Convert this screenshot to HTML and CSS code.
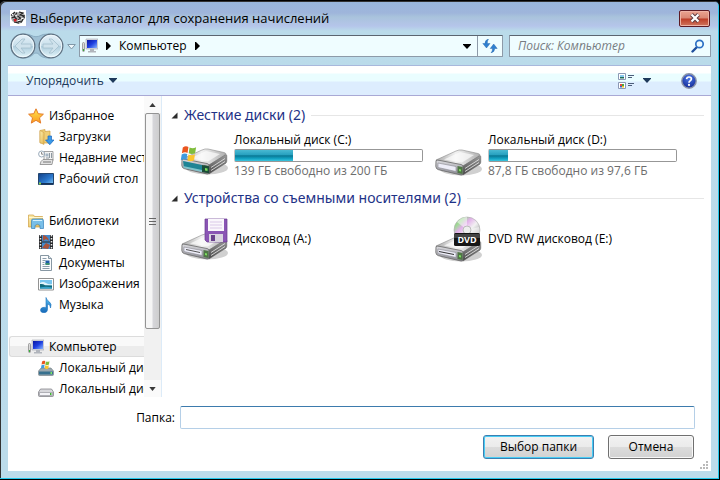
FILE: index.html
```html
<!DOCTYPE html>
<html lang="ru">
<head>
<meta charset="utf-8">
<title>Выберите каталог для сохранения начислений</title>
<link rel="stylesheet" href="styles.css">
</head>
<body>
<svg class="defs" aria-hidden="true">
  <defs>
    <linearGradient id="gTop" x1="0" y1="0" x2="1" y2="0"><stop offset="0" stop-color="#a8a8a8"/><stop offset=".45" stop-color="#f2f2f2"/><stop offset="1" stop-color="#b0b0b0"/></linearGradient>
    <linearGradient id="gFront" x1="0" y1="0" x2="0" y2="1"><stop offset="0" stop-color="#dcdce0"/><stop offset="1" stop-color="#85858d"/></linearGradient>
    <linearGradient id="gSide" x1="0" y1="0" x2="0" y2="1"><stop offset="0" stop-color="#9c9c9c"/><stop offset="1" stop-color="#484848"/></linearGradient>
    <linearGradient id="gScreen" x1="0" y1="0" x2="1" y2="1"><stop offset="0" stop-color="#0a17a0"/><stop offset=".5" stop-color="#1e3fe0"/><stop offset="1" stop-color="#86b4ff"/></linearGradient>
    <linearGradient id="gDesk" x1="0" y1="0" x2="1" y2="1"><stop offset="0" stop-color="#123f86"/><stop offset=".6" stop-color="#2d7bd0"/><stop offset="1" stop-color="#8fd0f5"/></linearGradient>
    <linearGradient id="gBlue" x1="0" y1="0" x2="0" y2="1"><stop offset="0" stop-color="#59c1f3"/><stop offset="1" stop-color="#1668b8"/></linearGradient>
    <linearGradient id="gFolder" x1="0" y1="0" x2="1" y2="1"><stop offset="0" stop-color="#fdf0b0"/><stop offset="1" stop-color="#e3b44c"/></linearGradient>
    <linearGradient id="gStar" x1="0" y1="0" x2="0" y2="1"><stop offset="0" stop-color="#ffe64d"/><stop offset="1" stop-color="#fb9a20"/></linearGradient>
    <linearGradient id="gNav" x1="0" y1="0" x2="0" y2="1"><stop offset="0" stop-color="#e6f2f9"/><stop offset=".48" stop-color="#c9dfeb"/><stop offset=".52" stop-color="#afcddd"/><stop offset="1" stop-color="#e3f5fa"/></linearGradient>
    <linearGradient id="gDisc" x1="0" y1="0" x2="1" y2="1"><stop offset="0" stop-color="#b5b5b5"/><stop offset=".2" stop-color="#9bdc90"/><stop offset=".35" stop-color="#e2b0ea"/><stop offset=".55" stop-color="#f2f2f2"/><stop offset=".8" stop-color="#a5a5a8"/><stop offset="1" stop-color="#dddddd"/></linearGradient>
    <radialGradient id="gHelp" cx=".5" cy=".3" r=".8"><stop offset="0" stop-color="#4b79e8"/><stop offset="1" stop-color="#0d1f8a"/></radialGradient>
  </defs>
  <symbol id="pc" viewBox="0 0 16 16">
    <rect x=".5" y="4.500" width="2" height="9" rx="1" fill="#dadada" stroke="#8e8e8e" stroke-width=".8"/>
    <path d="M1 11h1v2H1z" fill="#36b336"/>
    <path d="M4 1h12v10H4z" fill="#d9dbe2" stroke="#a2a6b0" stroke-width=".6"/>
    <path d="M5 2h10v8H5z" fill="url(#gScreen)"/>
    <path d="M8 11h4v2h2v1.500H6V13h2z" fill="#b1b5bc"/>
  </symbol>
  <symbol id="flag" viewBox="0 0 16 16">
    <path d="M2.500 2.200C4.500.8 6 1 7.500 1.800L6.700 7C5 6.200 3.500 6.300 1.700 7.300z" fill="#ea5620"/>
    <path d="M8.500 2.200c2 1 3.800.9 5.800-.2l-.8 5.200c-2 1.100-3.700 1.200-5.800.2z" fill="#7fbd3c"/>
    <path d="M1.500 8.400c1.900-1 3.400-1.100 5-.3l-.8 5.200c-1.500-.8-3-.7-5 .3z" fill="#3f9be0"/>
    <path d="M7.500 8.500c2 1 3.800.9 5.800-.2l-.8 5.200c-2 1.100-3.700 1.200-5.800.2z" fill="#fbc52d"/>
  </symbol>
  <symbol id="drive" viewBox="0 0 48 28">
    <ellipse cx="27" cy="20" rx="21" ry="6.500" fill="#d0d0d0"/>
    <path d="M2 11 22 2q3-1.500 6-1l16 3.500q3 .6 1 2.600L29 17 4 13z" fill="url(#gTop)" stroke="#8a8a8a" stroke-width=".6"/>
    <path d="M10 10.500 26 3l14 3L28 13.500z" fill="#fcfcfc" opacity=".7"/>
    <path d="M2 11.500q1-.6 3-.2l22 4.200q2 .5 2 2v7.300q0 1.700-2 1.200L4.500 20.700Q2 20 1.800 17.500z" fill="url(#gFront)" stroke="#666" stroke-width=".8"/>
    <path d="M29 17 46 6.500q.8 0 .8 1.500v5q0 1.500-1 2.200L29 26z" fill="url(#gSide)" stroke="#666" stroke-width=".5"/>
    <path d="M31 19.500 45 10.500M31 22.500l14-9" stroke="#ededed" stroke-width=".8"/>
    <path d="m4 14 18 3.500v5l-18-4z" fill="#ededf8" stroke="#8a8a92" stroke-width=".6"/>
    <path d="m23.500 17 5 1v7l-5-1z" fill="#4f7645"/><path d="m25 20 2 .4v2l-2-.4z" fill="#7be05e"/>
  </symbol>
  <symbol id="arrowR" viewBox="0 0 5 8"><path d="M0 0h1l4 4-4 4H0z"/></symbol>
  <symbol id="arrowD" viewBox="0 0 8 5"><path d="M0 0h8v.8L4 5 0 .8z"/></symbol>
</svg>

<div class="window">
  <header class="titlebar">
    <svg class="i16" viewBox="0 0 16 16"><path d="M0 0h16v16H0z" fill="#fff"/><path d="M1.500 6Q4 1.500 8 2.500 11 .8 14 3.500q2 3 .5 5.500L12 11.500Q10 15 7 13.500L3.500 12Q.5 10 1.500 6z" fill="#a9a9a9"/><path d="M1 5.500 5 2m-1 5 3-4.500M9 2l4 1-3 2 5 1M1.500 8l3-1 2 2-3 1m4-4 3 2-3 3 4 1 2-4m-1-2 2 2M4 12l5 1" stroke="#222" stroke-width="1.100" fill="none"/><path d="m5 5 2 1m4 3 3-1M2 4l1 1M7 11l3-1" stroke="#fff" stroke-width="1"/><path d="M4 9h2.500v2.500H4z" fill="#d31d25"/></svg>
    <h1>Выберите каталог для сохранения начислений</h1>
    <button class="close" type="button" aria-label="Закрыть"><svg width="12" height="10" viewBox="0 0 12 10"><path d="M2.500 1.500 9.500 8.500M9.500 1.500 2.500 8.500" stroke="#5c3a40" stroke-width="4"/><path d="M2.500 1.500 9.500 8.500M9.500 1.500 2.500 8.500" stroke="#fff" stroke-width="2.200"/></svg></button>
  </header>

  <nav class="navbar">
    <div class="history">
      <svg class="plate" viewBox="0 0 56 28"><path d="M14 1q7 0 11 2.500 3 1 6 0Q35 1 42 1q13 1 13 13 0 12-13 13-8 0-12-5-2-1-4 0-4 5-12 5Q1 26 1 14 1 2 14 1z" fill="#9fc0d4" stroke="#88abc0"/></svg>
      <button type="button" aria-label="Назад"><svg viewBox="0 0 26 26"><circle cx="13" cy="13" r="11.800" fill="url(#gNav)" stroke="#607282" stroke-width="1.300"/><circle cx="13" cy="13" r="10.700" fill="none" stroke="#eff8fc"/><path d="m5 13 7-7h3l-4 5h10v4H11l4 5h-3z" fill="#cfe2ec" stroke="#a3bfcd" stroke-width=".8"/></svg></button>
      <button type="button" aria-label="Вперёд"><svg viewBox="0 0 26 26"><circle cx="13" cy="13" r="11.800" fill="url(#gNav)" stroke="#607282" stroke-width="1.300"/><circle cx="13" cy="13" r="10.700" fill="none" stroke="#eff8fc"/><path d="m21 13-7-7h-3l4 5H5v4h10l-4 5h3z" fill="#cfe2ec" stroke="#a3bfcd" stroke-width=".8"/></svg></button>
    </div>
    <button class="recent" type="button" aria-label="Недавние страницы"><svg width="9" height="6" viewBox="0 0 9 6"><path d="M.7.500h7.600L4.500 5z" fill="#eef7fb" stroke="#8198a8"/></svg></button>
    <div class="address">
      <svg class="i16"><use href="#pc"/></svg>
      <svg class="ar"><use href="#arrowR"/></svg>
      <a href="#">Компьютер</a>
      <svg class="ar"><use href="#arrowR"/></svg>
      <button class="drop" type="button" aria-label="Адреса"><svg class="ad"><use href="#arrowD"/></svg></button>
      <button class="refresh" type="button" aria-label="Обновить"><svg width="16" height="14" viewBox="0 0 16 14"><path d="M6.500 0Q2.800 1 3 4.500H.800L4.500 9 8 4.500H5.300Q5 2 6.500 0z" fill="#2f80d0" stroke="#1c5aa5" stroke-width=".4"/><path d="M9 14q3.700-1 3.700-4.500h2.500L11.700 5 8.200 9.500h2.300q.2 2.500-1.500 4.500z" fill="#2f80d0" stroke="#1c5aa5" stroke-width=".4"/></svg></button>
    </div>
    <label class="search"><input type="text" aria-label="Поиск" placeholder="Поиск: Компьютер"><svg width="14" height="14" viewBox="0 0 14 14"><path d="M6 8 1.500 12.500" stroke="#1f4f9c" stroke-width="2.400" stroke-linecap="round"/><circle cx="8.500" cy="5" r="3.700" fill="#eefcff" stroke="#2c70c4" stroke-width="1.700"/></svg></label>
  </nav>

  <main class="client">
    <div class="toolbar">
      <button class="organize" type="button">Упорядочить <svg class="ad"><use href="#arrowD"/></svg></button>
      <button class="view" type="button" aria-label="Вид"><svg width="16" height="16" viewBox="0 0 16 16"><path d="M.5.500h7v6h-7zM.5 9.500h7v6h-7z" fill="#fff" stroke="#8b98b4"/><path d="M2 2h4v2H2z" fill="#86c7ec"/><path d="M2 4h4v1.500H2z" fill="#1e6b56"/><path d="M2 11h2v2H2z" fill="#e8483a"/><path d="M4 11h2v2H4z" fill="#45a845"/><path d="M2 13h2v1.500H2z" fill="#3267ca"/><path d="M4 13h2v1.500H4z" fill="#f1c21c"/><path d="M10 2.500h6M10 4.500h4M10 10.500h6M10 12.500h4" stroke="#4d5d7a"/></svg><svg class="ad"><use href="#arrowD"/></svg></button>
      <button class="help" type="button" aria-label="Справка"><svg width="16" height="16" viewBox="0 0 16 16"><circle cx="8" cy="8" r="7.200" fill="url(#gHelp)" stroke="#8c94a8" stroke-width="1.400"/><path d="M5.600 6.200Q5.800 4 8 4q2.400 0 2.400 2 0 1-1.200 1.800Q8 8.500 8 9.700" fill="none" stroke="#fff" stroke-width="1.700"/><circle cx="8" cy="11.900" r="1.100" fill="#fff"/></svg></button>
    </div>

    <div class="panes">
      <aside class="tree">
        <ul>
          <li><svg class="i16" viewBox="0 0 16 16"><path d="m8 .8 2.200 4.900 5.200.5-3.900 3.600 1.200 5.300L8 12.300l-4.700 2.800 1.200-5.300L.6 6.200l5.200-.5z" fill="url(#gStar)" stroke="#e47b28"/></svg>Избранное</li>
          <li class="sub"><svg class="i16" viewBox="0 0 16 16"><path d="M2 1.500 7 .500v2L12 2v12H2z" fill="#efcf77" stroke="#cf9f43" stroke-width=".7"/><path d="m2 1.500 4 2v12l-4-2z" fill="url(#gFolder)" stroke="#cf9f43" stroke-width=".6"/><path d="M10 7h3.500v4H16l-4.200 4.700L7.500 11H10z" fill="#3a9ae8" stroke="#1c66bb" stroke-width=".7"/></svg>Загрузки</li>
          <li class="sub"><svg class="i16" viewBox="0 0 16 16"><path d="M6 1.500h9v9H6z" fill="#f3f3f3" stroke="#8d8d8d" stroke-width=".8"/><path d="M7.500 3.500h3v3h-3z" fill="#a6b6c4"/><path d="M11.500 3v5M13.500 3v5M8 8h3" stroke="#74818c" stroke-width=".8"/><path d="M5 9.500h10l-1 5H2l1-3z" fill="#e2e2e2" stroke="#888" stroke-width=".8"/><path d="M5 12h8" stroke="#777"/><circle cx="3.600" cy="4" r="3" fill="#fff" stroke="#8ea2b2" stroke-width=".9"/><path d="M3.600 2v2.200H5.500" fill="none" stroke="#555" stroke-width=".7"/></svg>Недавние места</li>
          <li class="sub"><svg class="i16" viewBox="0 0 16 16"><path d="M.5 2.500h15v11H.500z" fill="url(#gDesk)" stroke="#24466f"/><path d="M1 12h14v1.500H1z" fill="#163259"/><path d="M1 11.500h2v2H1z" fill="#8dd34b"/></svg>Рабочий стол</li>
          <li class="gap"></li>
          <li><svg class="i16" viewBox="0 0 16 16"><path d="M.5 2h5l1 1.500h8V14H.500z" fill="url(#gFolder)" stroke="#cf9f43" stroke-width=".7"/><path d="M1 4.500h14" stroke="#fff8d0"/><path d="M3.500 7.500q0-1.500 1.500-1.500h9q1.500 0 1.500 1.500v8H12v-3q-2.500-2.500-5 0v3H3.500z" fill="#79bfe8" stroke="#3a83bb" stroke-width=".7"/><path d="M5 7.500h9" stroke="#d6f1ff"/></svg>Библиотеки</li>
          <li class="sub"><svg class="i16" viewBox="0 0 16 16"><path d="M1 1h14v14H1z" fill="#27282b"/><path d="M4 1h8v6.500H4zM4 8.500h8V15H4z" fill="#4389cc"/><path d="M5 1q5 1 6 6l-3-2-3 2zM4 14l4-5 4 2-2 4z" fill="#a8533c"/><path d="M2.500 1v14M13.500 1v14" stroke="#eee" stroke-width="1.500" stroke-dasharray="1.500 1.500"/></svg>Видео</li>
          <li class="sub"><svg class="i16" viewBox="0 0 16 16"><path d="M2.500.500h8l3 3v12h-11z" fill="#fbfcfd" stroke="#8797a3"/><path d="M10.500.500v3h3" fill="#dde5eb" stroke="#8797a3"/><path d="M4.500 3.500h4M4.500 5.500h3M4.500 7.500h2M4.500 9.500h2M4.500 11.500h7M4.500 13.500h7" stroke="#8b9dab"/><path d="M7.500 5.500h4v4h-4z" fill="#1d5ba6"/><path d="M7.500 8h4v2h-4z" fill="#3a8f70"/></svg>Документы</li>
          <li class="sub"><svg class="i16" viewBox="0 0 16 16"><path d="M.5 2.500h15v11.500H.500z" fill="#fff" stroke="#929292"/><path d="M2 4h12v8.500H2z" fill="#79c6ee"/><path d="M2 7q3-2 6 0t6 1v1.500H2z" fill="#e2f5fc"/><path d="M2 8q3-.5 5 1.200l7 .3v3H2z" fill="#126b7b"/><path d="M2 11.500q6-1.500 12 0v1H2z" fill="#34a3cc"/></svg>Изображения</li>
          <li class="sub"><svg class="i16" viewBox="0 0 16 16"><path d="M8 .500q.5 2.500 3.200 4.200 3 2.300 1.300 6.300.2-3.500-3-4v5.500q0 3-3.500 3.300Q2.500 15.800 2.500 13q.3-2.700 3.500-2.700 1.200 0 2 .4z" fill="url(#gBlue)" stroke="#1a70be" stroke-width=".6"/></svg>Музыка</li>
          <li class="gap"></li>
          <li class="selected"><svg class="i16"><use href="#pc"/></svg>Компьютер</li>
          <li class="sub"><svg class="i16" viewBox="0 0 16 16"><path d="M3 8h10l2.500 3v3.500q0 1-1 1h-13q-1 0-1-1V11z" fill="#9ba8af" stroke="#6d7a82" stroke-width=".6"/><path d="M1 11.500h14v3H1z" fill="#37718f"/><path d="M12.500 12h1.500v2h-1.500z" fill="#7cea63"/><use href="#flag" x="2" y="0" width="11" height="10"/></svg>Локальный диск (C:)</li>
          <li class="sub"><svg class="i16" viewBox="0 0 16 16"><path d="M2.500 8h11l2 3v3.500q0 1-1 1h-13q-1 0-1-1V11z" fill="#d8d8dc" stroke="#77777d" stroke-width=".7"/><path d="M1.500 11.500h13v3h-13z" fill="#f4f4f8" stroke="#8b8b92" stroke-width=".6"/><path d="M12 12h1.500v2H12z" fill="#3fb52f"/></svg>Локальный диск (D:)</li>
        </ul>
        <div class="scroll">
          <button type="button" aria-label="Вверх"><svg width="7" height="4" viewBox="0 0 8 5"><path d="M4 0 8 5H0z" fill="#3a3a3a"/></svg></button>
          <div class="thumb"><i></i><i></i><i></i></div>
          <button type="button" aria-label="Вниз"><svg width="7" height="4" viewBox="0 0 8 5"><path d="M4 5 8 0H0z" fill="#3a3a3a"/></svg></button>
        </div>
      </aside>

      <div class="content">
        <section>
          <h2><svg width="7" height="7" viewBox="0 0 7 7"><path d="M6.500.500v6h-6z" fill="#2b2b2b"/></svg>Жесткие диски (2)</h2>
          <div class="items">
            <article class="item">
              <svg class="big" viewBox="0 0 48 48"><use href="#drive" y="16" width="48" height="28"/><path d="m3 29 19 4v6L4 35z" fill="#1e8495"/><path d="m3 34 19 4v2L4 36z" fill="#7fc4cc"/><path d="m22 33 7 1.300v7L22 40z" fill="#1b4c38"/><path d="m25 36 2.500.5v2.500l-2.500-.5z" fill="#7be05e"/><use href="#flag" x="0" y="13" width="18" height="18"/></svg>
              <div class="info"><b>Локальный диск (C:)</b><div class="bar"><span style="width:31%"></span></div><small>139 ГБ свободно из 200 ГБ</small></div>
            </article>
            <article class="item">
              <svg class="big" viewBox="0 0 48 48"><use href="#drive" y="17" width="48" height="28"/></svg>
              <div class="info"><b>Локальный диск (D:)</b><div class="bar"><span style="width:10%"></span></div><small>87,8 ГБ свободно из 97,6 ГБ</small></div>
            </article>
          </div>
        </section>
        <section>
          <h2><svg width="7" height="7" viewBox="0 0 7 7"><path d="M6.500.500v6h-6z" fill="#2b2b2b"/></svg>Устройства со съемными носителями (2)</h2>
          <div class="items">
            <article class="item">
              <svg class="big" viewBox="0 0 48 48"><use href="#drive" y="18" width="48" height="28"/><path d="m6 34.500 14 3" stroke="#555"/><path d="M25 4h22v23H27l-2-2z" fill="#8a55b4" stroke="#69398f" stroke-width=".7"/><path d="M28 4h16v12H28z" fill="#faf7fc"/><path d="M30 7h12M30 10h12M30 13h12" stroke="#dac9e8"/><path d="M29 19h14v8H29z" fill="#d9d4df"/><path d="M31 20h4v6h-4z" fill="#68408b"/></svg>
              <div class="info"><b>Дисковод (A:)</b></div>
            </article>
            <article class="item">
              <svg class="big" viewBox="0 0 48 48"><use href="#drive" y="20" width="48" height="28"/><path d="m5 36.500 15 3" stroke="#333"/><circle cx="33" cy="15" r="13" fill="url(#gDisc)" stroke="#aaa" stroke-width=".6"/><path d="M33 15 23 7q5-5 10-5zM33 15l12-3q2 6-2 10z" fill="#fff" opacity=".5"/><circle cx="33" cy="15" r="4" fill="#eee" stroke="#bbb"/><rect x="20" y="18" width="26" height="13" rx="1.500" fill="#161616"/><path d="M20 19h26v4H20z" fill="#444"/><text class="dvd" x="33" y="28">DVD</text></svg>
              <div class="info"><b>DVD RW дисковод (E:)</b></div>
            </article>
          </div>
        </section>
      </div>
    </div>

    <form class="footer">
      <div class="field"><label for="folder">Папка:</label><input id="folder" type="text"></div>
      <div class="actions"><button class="primary" type="button">Выбор папки</button><button type="button">Отмена</button></div>
      <svg class="grip" width="8" height="8" viewBox="0 0 8 8"><path d="M6 0h2v2H6zM3 3h2v2H3zM6 3h2v2H6zM0 6h2v2H0zM3 6h2v2H3zM6 6h2v2H6z" fill="#bababa"/></svg>
    </form>
  </main>
</div>
</body>
</html>
```
FILE: styles.css
```css
* { box-sizing: border-box; }

body {
  margin: 0;
  background: #000;
  color: #000;
  font: 12px/16px "Open Sans", "Noto Sans", sans-serif;
}

button, input { font: inherit; color: inherit; }
button { padding: 0; border: 0; background: none; }
svg { display: block; flex: none; }
ul { margin: 0; padding: 0; list-style: none; }

.defs { position: absolute; width: 0; height: 0; }
.i16 { width: 16px; height: 16px; }
.ar { width: 5px; height: 8px; }
.ad { width: 8px; height: 5px; }

.window {
  display: flex;
  flex-direction: column;
  height: 100vh;
  padding: 0 8px 8px;
  border: 1px solid #000;
  border-width: 1px 1px 1px 0;
  border-radius: 6px 6px 0 0;
  background: linear-gradient(#99b7dc 0, #9fb5db 12px, #a9c3dc 16px, #b5c5ea 25px, #badbea 30px, #bcdceb 100%);
  box-shadow: inset -1px -1px #23c8ec, inset 1px 1px #333;
}

.titlebar {
  display: flex;
  align-items: center;
  gap: 4px;
  height: 34px;
  padding: 0 1px 0 2px;
}
.titlebar h1 { flex: 1; margin: 0; font-size: 13px; font-weight: 400; }
.close {
  display: grid;
  place-items: center;
  width: 31px;
  height: 17px;
  border: 1px solid #5d1a24;
  border-radius: 2px;
  background: linear-gradient(#eba491, #d98673 48%, #bd3c26 52%, #cf7560);
  box-shadow: inset 0 0 0 1px #eeb2a5;
}

.navbar {
  display: flex;
  height: 30px;
}
.history { position: relative; display: flex; gap: 2px; width: 56px; height: 26px; margin-top: -2px; padding-left: 2px; }
.history .plate { position: absolute; inset: 0; width: 56px; height: 26px; }
.history button { position: relative; width: 26px; height: 26px; }
.recent { display: grid; place-items: center; width: 15px; height: 24px; }
.address, .search {
  display: flex;
  align-items: center;
  height: 22px;
  border: 1px solid #8d9aa8;
  border-top-color: #5b6570;
  border-radius: 1px;
  background: #effdff;
}
.address { flex: 1; padding-left: 2px; }
.address .ar { margin: 0 8px; }
.address a { color: inherit; text-decoration: none; }
.drop { display: grid; place-items: center; width: 20px; height: 20px; margin-left: auto; }
.refresh { display: grid; place-items: center; width: 25px; height: 20px; border-left: 1px solid #8d9aa8; }
.search { flex: 0 1 202px; margin-left: 6px; padding-right: 5px; }
.search input { flex: 1; min-width: 0; padding: 0 0 0 8px; border: 0; outline: 0; background: none; font-style: italic; }
.search input::placeholder { color: #777c82; opacity: 1; }

.client {
  display: flex;
  flex: 1;
  flex-direction: column;
  min-height: 0;
  background: #fff;
}
.toolbar {
  display: flex;
  align-items: center;
  height: 31px;
  padding: 0 14px 0 18px;
  border-top: 1px solid #a8b8dc;
  border-bottom: 1px solid #a9a9d5;
  background: linear-gradient(#fff 0, #fff 7px, #eafdff 8px, #eafdff 15px, #ddedfe 16px);
}
.toolbar button { display: flex; align-items: center; color: #1e395b; fill: #1e395b; }
.organize { gap: 5px; margin-right: auto; }
.view { gap: 9px; margin-right: 30px; }

.panes { display: flex; flex: 1; min-height: 0; }
.tree { display: flex; width: 154px; border-right: 1px solid #dcebf8; }
.tree ul { flex: 1; min-width: 0; height: 100%; padding-top: 9px; overflow: hidden; }
.tree li {
  display: flex;
  align-items: center;
  gap: 5px;
  height: 21px;
  padding-left: 20px;
  overflow: hidden;
  white-space: nowrap;
}
.tree .sub { padding-left: 30px; }
.tree .selected {
  margin-left: 1px;
  padding-left: 18px;
  border: 1px solid #dcdcdc;
  border-right: 0;
  border-radius: 3px 0 0 3px;
  background: linear-gradient(#f9f9f9 48%, #ececec 50%);
}
.scroll {
  display: flex;
  flex-direction: column;
  align-items: center;
  justify-content: space-between;
  width: 17px;
  background: #f1f1f1;
}
.scroll button { display: grid; place-items: center; width: 17px; height: 17px; background: #fafafa; }
.thumb {
  display: flex;
  flex-direction: column;
  align-items: center;
  justify-content: center;
  gap: 1px;
  width: 15px;
  flex: 0 1 216px;
  margin-bottom: auto;
  border: 1px solid #949494;
  border-radius: 2px;
  background: linear-gradient(90deg, #f6f6f6 45%, #d6d6da 55%, #cecece);
}
.thumb i { width: 7px; height: 2px; border-bottom: 1px solid #666; }

.content { flex: 1; min-width: 0; padding: 8px 7px 0 9px; }
section + section { margin-top: 10px; }
h2 {
  display: flex;
  align-items: center;
  gap: 6px;
  margin: 0;
  color: #1e3287;
  font-family: "Noto Sans", sans-serif;
  font-size: 14px;
  font-weight: 400;
  line-height: 22px;
}
h2::after { content: ""; flex: 1; height: 1px; background: #e6e6e6; }
.items { display: grid; grid-template-columns: 254px 254px; padding-left: 9px; }
.item { display: flex; align-items: center; gap: 6px; height: 48px; margin-top: 6px; }
section:first-child .item { height: 43px; margin-top: 8px; }
.big { width: 48px; height: 48px; }
.info { flex: 1; padding-right: 11px; }
.info b, .info small { display: block; font-size: 12px; font-weight: 400; line-height: 16px; white-space: nowrap; }
.info small { color: #6d6d6d; }
.bar { height: 13px; margin: 1px 0; padding: 0 1px 0 0; border: 1px solid #979797; border-left-color: #c4c4c4; border-radius: 2px; background: #fff; }
.bar span { display: block; height: 100%; background: linear-gradient(#49b9d2 0, #26a0bf 45%, #087794 52%, #14a5c5 80%, #3cc5dd); }
.dvd { fill: #fff; font: bold 9px "Open Sans", sans-serif; text-anchor: middle; }

.footer { position: relative; padding: 9px 16px 12px 0; }
.field { display: flex; align-items: center; }
.field label { width: 172px; padding-right: 5px; text-align: right; }
.field input {
  flex: 1;
  min-width: 0;
  height: 23px;
  border: 1px solid #b5cfe7;
  border-top-color: #3d7bad;
  border-radius: 2px;
  outline: 0;
}
.actions { display: flex; justify-content: flex-end; gap: 14px; margin-top: 6px; padding-right: 1px; }
.actions button {
  width: 86px;
  height: 24px;
  border: 1px solid #707070;
  border-radius: 3px;
  background: linear-gradient(#f2f2f2, #ebebeb 48%, #dcdcdc 50%, #d2d2d2);
  box-shadow: inset 0 0 0 1px #f8f8f8;
}
.actions .primary { width: 111px; border-color: #3c7fb1; box-shadow: inset 0 0 0 1px #48cdf5; }
.grip { position: absolute; right: 3px; bottom: 2px; }
```
